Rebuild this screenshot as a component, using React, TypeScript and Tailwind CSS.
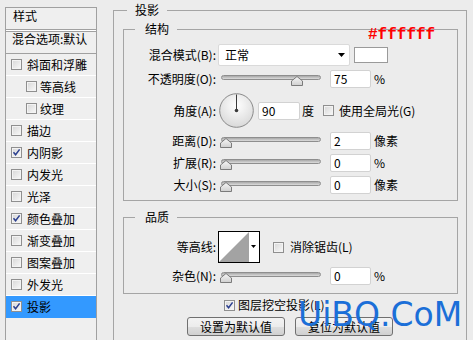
import React from "react";

const Check = ({ checked }: { checked?: boolean }) => (
  <span className="relative flex h-[11px] w-[11px] shrink-0 items-center justify-center border border-[#8f8f8f] bg-[linear-gradient(135deg,#d6d6d6,#f9f9f9)] shadow-[inset_0_0_0_1px_#f3f3f3]">
    {checked && (
      <svg width="9" height="9" viewBox="0 0 9 9" className="absolute left-[0px] top-[0px]">
        <path d="M1.5 4.2 L3.6 6.8 L7.6 1.4" fill="none" stroke="#2b3f8f" strokeWidth="1.5" />
      </svg>
    )}
  </span>
);

const Thumb = () => (
  <svg width="12" height="10" viewBox="0 0 12 10">
    <defs>
      <linearGradient id="thg" x1="0" y1="0" x2="0" y2="1">
        <stop offset="0" stopColor="#f7f7f7" />
        <stop offset="1" stopColor="#cfcfcf" />
      </linearGradient>
    </defs>
    <path d="M0.5 9.5 V5 L6 0.5 L11.5 5 V9.5 Z" fill="url(#thg)" stroke="#7b7b7b" />
  </svg>
);

const Slider = ({ thumbClass }: { thumbClass: string }) => (
  <div className="relative h-[18px] w-[102px] shrink-0">
    <div className="absolute left-[2px] top-[5px] h-[5px] w-[100px] rounded-full border border-[#8e8e8e] bg-[linear-gradient(#a8a8a8,#dcdcdc)]" />
    <div className={"absolute top-[6px] " + thumbClass}>
      <Thumb />
    </div>
  </div>
);

const Field = ({ value, w = "w-[41px]" }: { value: string; w?: string }) => (
  <div className={"h-[18px] shrink-0 rounded-[2px] border border-[#d2d2d2] bg-white pl-[3px] text-[12px] leading-[16px] " + w}>
    {value}
  </div>
);

const Label = ({ children }: { children: React.ReactNode }) => (
  <div className="w-[92px] shrink-0 text-right text-[12px] leading-[16px]">{children}</div>
);

const ListRow = ({
  label,
  checked,
  sub,
  selected,
}: {
  label: string;
  checked?: boolean;
  sub?: boolean;
  selected?: boolean;
}) => (
  <div
    className={
      "flex h-[22px] items-center border-b " +
      (selected ? "border-[#3399ff] bg-[#3399ff] " : "border-white ") +
      (sub ? "gap-[3px] pl-[20px]" : "gap-[5px] pl-[5px]")
    }
  >
    <Check checked={checked} />
    <span className="text-[12px] leading-[16px]">{label}</span>
  </div>
);

export default function App() {
  return (
    <div className="relative flex h-[340px] w-[473px] items-start overflow-hidden bg-[#ececec] font-['Noto_Sans_CJK_SC',sans-serif] text-black">
      {/* Left list */}
      <div className="ml-[5px] mt-[7px] h-[400px] w-[92px] shrink-0 border border-[#a0a0a0] bg-[#efefef]">
        <div className="h-[21px] pl-[7px] text-[12px] leading-[16px]">样式</div>
        <div className="h-[3px] border-y border-[#a0a0a0] bg-white" />
        <div className="h-[22px] border-b border-[#a0a0a0] pl-[6px] text-[12px] leading-[14px]">混合选项:默认</div>
        <ListRow label="斜面和浮雕" />
        <ListRow label="等高线" sub />
        <ListRow label="纹理" sub />
        <ListRow label="描边" />
        <ListRow label="内阴影" checked />
        <ListRow label="内发光" />
        <ListRow label="光泽" />
        <ListRow label="颜色叠加" checked />
        <ListRow label="渐变叠加" />
        <ListRow label="图案叠加" />
        <ListRow label="外发光" />
        <ListRow label="投影" checked selected />
      </div>

      {/* Right */}
      <fieldset className="ml-[16px] mt-[2px] w-[354px] shrink-0 border border-[#a5a5a5] pb-[30px] pl-[9px] pr-[8px]">
        <legend className="ml-[4px] px-[8px] text-[12px] leading-[16px]">投影</legend>

        <fieldset className="mt-[3px] border border-[#a5a5a5] pb-[6px]">
          <legend className="ml-[11px] pl-[10px] pr-[8px] text-[12px] leading-[16px]">结构</legend>

          <div className="mt-[7px] flex h-[22px] items-center">
            <Label>混合模式(B):</Label>
            <div className="ml-[2px] flex h-[22px] w-[132px] items-center justify-between rounded-[2px] border border-[#dadada] bg-white pl-[6px] pr-[4px] text-[12px] leading-[16px]">
              <span>正常</span>
              <svg width="7" height="4" viewBox="0 0 7 4">
                <path d="M0 0 H7 L3.5 4 Z" fill="#000" />
              </svg>
            </div>
            <div className="ml-[4px] h-[16px] w-[34px] border border-[#9a9a9a] bg-white" />
          </div>

          <div className="mt-[4px] flex h-[18px] items-center">
            <Label>不透明度(O):</Label>
            <div className="ml-[3px]">
              <Slider thumbClass="left-[72px]" />
            </div>
            <div className="ml-[9px]">
              <Field value="75" />
            </div>
            <span className="ml-[3px] text-[12px] leading-[16px]">%</span>
          </div>

          <div className="mt-[5px] flex h-[35px] items-center">
            <Label>角度(A):</Label>
            <svg className="ml-[3px] shrink-0" width="35" height="35" viewBox="0 0 35 35">
              <defs>
                <radialGradient id="dialg" cx="50%" cy="35%" r="65%">
                  <stop offset="0" stopColor="#ffffff" />
                  <stop offset="1" stopColor="#d9d9d9" />
                </radialGradient>
              </defs>
              <circle cx="17.5" cy="17.5" r="16.8" fill="url(#dialg)" stroke="#8a8a8a" />
              <line x1="17.5" y1="17.5" x2="17.5" y2="1.5" stroke="#3a3a3a" strokeWidth="1" />
              <circle cx="17.5" cy="17.5" r="1.8" fill="#3a3a3a" />
            </svg>
            <div className="ml-[4px]">
              <Field value="90" w="w-[42px]" />
            </div>
            <span className="ml-[2px] text-[12px] leading-[16px]">度</span>
            <div className="ml-[9px] flex items-center gap-[5px]">
              <Check />
              <span className="text-[12px] leading-[16px]">使用全局光(G)</span>
            </div>
          </div>

          <div className="mt-[4px] flex h-[18px] items-center">
            <Label>距离(D):</Label>
            <div className="ml-[3px]">
              <Slider thumbClass="left-[1px]" />
            </div>
            <div className="ml-[9px]">
              <Field value="2" />
            </div>
            <span className="ml-[3px] text-[12px] leading-[16px]">像素</span>
          </div>

          <div className="mt-[4px] flex h-[18px] items-center">
            <Label>扩展(R):</Label>
            <div className="ml-[3px]">
              <Slider thumbClass="left-[1px]" />
            </div>
            <div className="ml-[9px]">
              <Field value="0" />
            </div>
            <span className="ml-[3px] text-[12px] leading-[16px]">%</span>
          </div>

          <div className="mt-[4px] flex h-[18px] items-center">
            <Label>大小(S):</Label>
            <div className="ml-[3px]">
              <Slider thumbClass="left-[1px]" />
            </div>
            <div className="ml-[9px]">
              <Field value="0" />
            </div>
            <span className="ml-[3px] text-[12px] leading-[16px]">像素</span>
          </div>
        </fieldset>

        <fieldset className="mt-[8px] border border-[#a5a5a5] pb-[8px]">
          <legend className="ml-[11px] pl-[10px] pr-[8px] text-[12px] leading-[16px]">品质</legend>

          <div className="mt-[6px] flex h-[32px] items-center">
            <Label>等高线:</Label>
            <svg className="ml-[2px] shrink-0" width="42" height="32" viewBox="0 0 42 32">
              <rect x="0.5" y="0.5" width="41" height="31" fill="#fff" stroke="#000" />
              <polygon points="1,31 31,1 31,31" fill="#a3a3a3" />
              <path d="M33 14 H38 L35.5 17 Z" fill="#000" />
            </svg>
            <div className="ml-[13px] flex items-center gap-[6px]">
              <Check />
              <span className="text-[12px] leading-[16px]">消除锯齿(L)</span>
            </div>
          </div>

          <div className="mt-[4px] flex h-[18px] items-center">
            <Label>杂色(N):</Label>
            <div className="ml-[3px]">
              <Slider thumbClass="left-[1px]" />
            </div>
            <div className="ml-[9px]">
              <Field value="0" />
            </div>
            <span className="ml-[3px] text-[12px] leading-[16px]">%</span>
          </div>
        </fieldset>

        <div className="mt-[2px] flex h-[18px] items-center gap-[3px] pl-[101px]">
          <Check checked />
          <span className="text-[12px] leading-[16px]">图层挖空投影(L)</span>
        </div>

        <div className="mt-[3px] flex gap-[10px] pl-[64px]">
          <div className="h-[19px] w-[98px] rounded-[3px] border border-[#707070] bg-[linear-gradient(#f3f3f3_0%,#ececec_50%,#dedede_51%,#d0d0d0_100%)] text-center text-[12px] leading-[17px]">
            设置为默认值
          </div>
          <div className="h-[19px] w-[98px] rounded-[3px] border border-[#707070] bg-[linear-gradient(#f3f3f3_0%,#ececec_50%,#dedede_51%,#d0d0d0_100%)] text-center text-[12px] leading-[17px]">
            复位为默认值
          </div>
        </div>
      </fieldset>

      {/* Annotation overlay */}
      <div className="absolute left-[368px] top-[27px] font-['Liberation_Mono',monospace] text-[16px] font-bold leading-none text-[#ff0000]">
        #ffffff
      </div>

      {/* Watermark overlay */}
      <div className="absolute left-[298px] top-[298px] font-['DejaVu_Sans',sans-serif] text-[33px] leading-none text-[#1b6fd8]">
        UiBQ.CoM
      </div>
    </div>
  );
}
